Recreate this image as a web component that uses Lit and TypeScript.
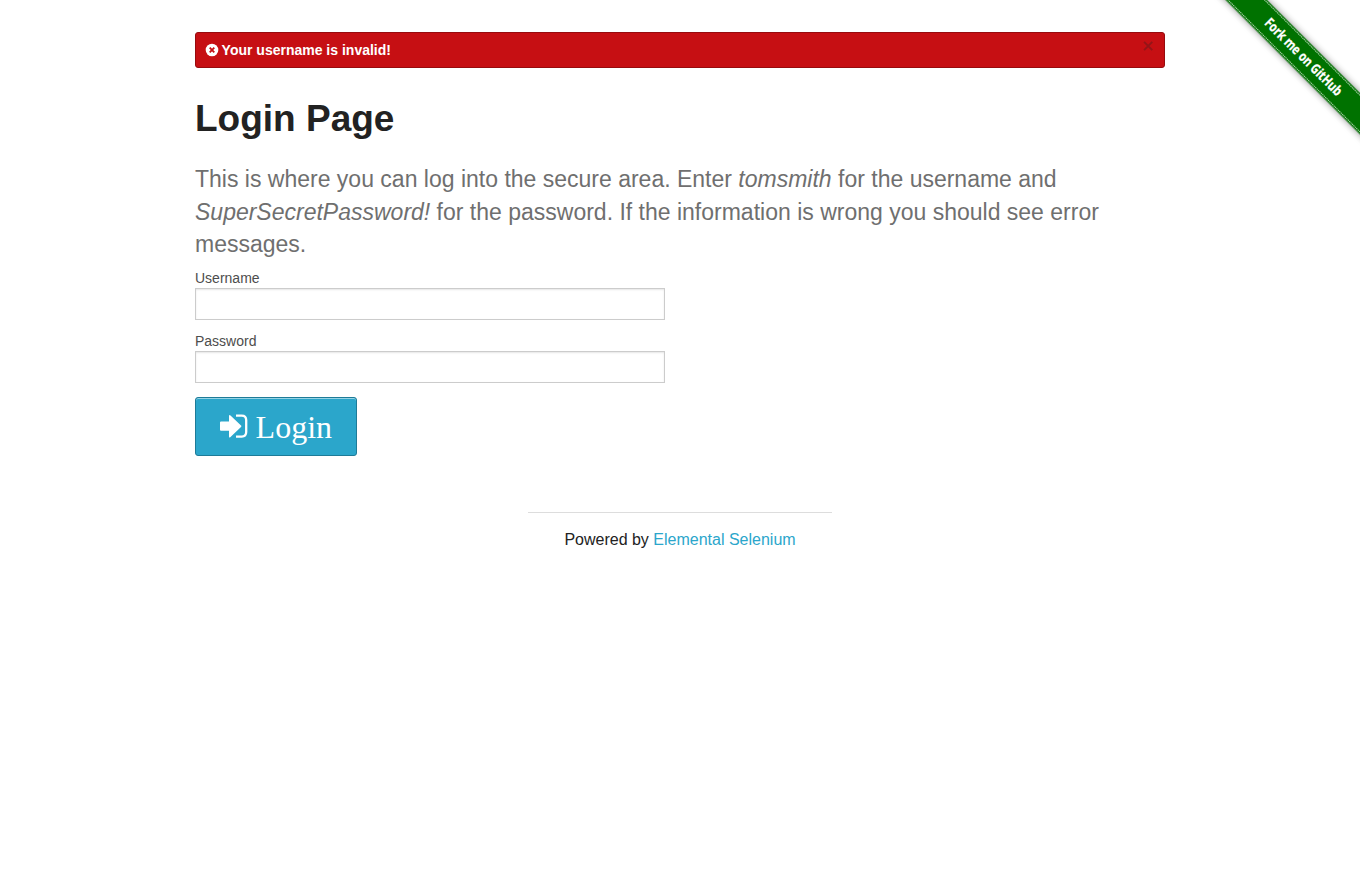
import { LitElement, html, css } from "lit";
import { customElement } from "lit/decorators.js";

@customElement("app-root")
export class AppRoot extends LitElement {
  static styles = css`
    :host {
      display: block;
      position: relative;
      height: 880px;
      overflow: hidden;
      background: #fff;
      color: #222;
      font-family: "Liberation Sans", Arial, sans-serif;
    }
    * { box-sizing: border-box; }
    .page { width: 970px; margin: 0 auto; padding-top: 32px; }
    .alert {
      display: flex;
      justify-content: space-between;
      height: 36px;
      padding: 0 10px 0 9px;
      border: 1px solid #970b0e;
      border-radius: 3px;
      background: #c60f13;
      color: #fff;
      font-size: 14px;
      font-weight: bold;
      line-height: 34px;
    }
    .message { display: flex; align-items: center; gap: 2.6px; }
    .status { width: 14px; height: 14px; margin-bottom: 1px; }
    .close { width: 11px; height: 11px; margin-top: 7px; opacity: 0.3; }
    h2 { margin: 25px 0 18px; font-size: 37px; line-height: 52px; }
    h4 {
      margin: 0 0 7px;
      color: #6f6f6f;
      font-size: 23px;
      font-weight: normal;
      line-height: 32.5px;
    }
    label { display: block; color: #4d4d4d; font-size: 14px; line-height: 20px; }
    input {
      display: block;
      width: 470px;
      height: 32px;
      margin: 0 0 11px;
      padding: 6px;
      border: 1px solid #ccc;
      border-radius: 0;
      background: #fff;
      box-shadow: inset 0 1px 2px rgba(0, 0, 0, 0.1);
      font: 14px "Liberation Sans", sans-serif;
    }
    button {
      display: flex;
      align-items: center;
      width: 162px;
      height: 59px;
      margin-top: 14px;
      padding: 2px 0 0 24px;
      gap: 7.6px;
      border: 1px solid #1e7b98;
      border-radius: 3px;
      background: #2ba6cb;
      box-shadow: inset 0 1px 0 rgba(255, 255, 255, 0.5);
      color: #fff;
      font: 32px "Liberation Serif", serif;
    }
    .enter { width: 28px; height: 24px; margin-bottom: 2px; }
    footer {
      width: 304px;
      margin: 56px auto 0;
      padding-top: 15px;
      border-top: 1px solid #ddd;
      text-align: center;
      font-size: 16px;
      line-height: 24px;
    }
    a { color: #2ba6cb; text-decoration: none; }
    .ribbon { position: absolute; top: 0; right: 0; width: 149px; height: 149px; }
    .ribbon text { font: bold 13.8px "Open Sans", sans-serif; }
    .band { filter: drop-shadow(0 0 3.5px rgba(0, 0, 0, 0.45)); }
  `;

  render() {
    return html`
      <main class="page">
        <div class="alert">
          <span class="message">
            <svg class="status" viewBox="0 0 14 14">
              <circle cx="7" cy="7" r="6.3" fill="#fff" />
              <path d="M4.7 4.7l4.6 4.6M9.3 4.7l-4.6 4.6" stroke="#c60f13" stroke-width="1.8" />
            </svg>
            <span>Your username is invalid!</span>
          </span>
          <svg class="close" viewBox="0 0 11 11">
            <path d="M1.1 1.9l8.2 8.2M9.3 1.9l-8.2 8.2" stroke="#222" stroke-width="2" />
          </svg>
        </div>
        <h2>Login Page</h2>
        <h4>
          This is where you can log into the secure area. Enter <em>tomsmith</em> for the username
          and <em>SuperSecretPassword!</em> for the password. If the information is wrong you should
          see error messages.
        </h4>
        <label for="username">Username</label>
        <input id="username" type="text" />
        <label for="password">Password</label>
        <input id="password" type="password" />
        <button type="button">
          <svg class="enter" viewBox="0 0 28 24">
            <path
              d="M1 7.5h8V2.2q0-2 1.5-.7l10.5 10q.8.7 0 1.4l-10.5 10q-1.5 1.3-1.5-.7v-5.4H1q-1 0-1-1V8.5q0-1 1-1z"
              fill="#fff"
            />
            <path
              d="M16 1.6H21.7q4.5 0 4.5 4.5v12q0 4.5-4.5 4.5h-5.7"
              fill="none"
              stroke="#fff"
              stroke-width="2.3"
            />
          </svg>
          <span>Login</span>
        </button>
        <footer>Powered by <a href="#">Elemental Selenium</a></footer>
      </main>
      <svg class="ribbon" viewBox="0 0 149 149">
        <g transform="translate(92.1 56.9) rotate(45)">
          <g class="band">
            <rect x="-130" y="-14.7" width="260" height="29.2" fill="#007200" />
          </g>
          <path
            d="M-130-13h260M-130 12.8h260"
            stroke="#fff"
            stroke-opacity=".65"
            stroke-dasharray="1.4 .6"
          />
          <text
            x=".3"
            y="4.4"
            text-anchor="middle"
            textLength="103"
            lengthAdjust="spacingAndGlyphs"
            fill="#fff"
            stroke="#fff"
            stroke-width=".25"
          >Fork me on GitHub</text>
        </g>
      </svg>
    `;
  }
}
